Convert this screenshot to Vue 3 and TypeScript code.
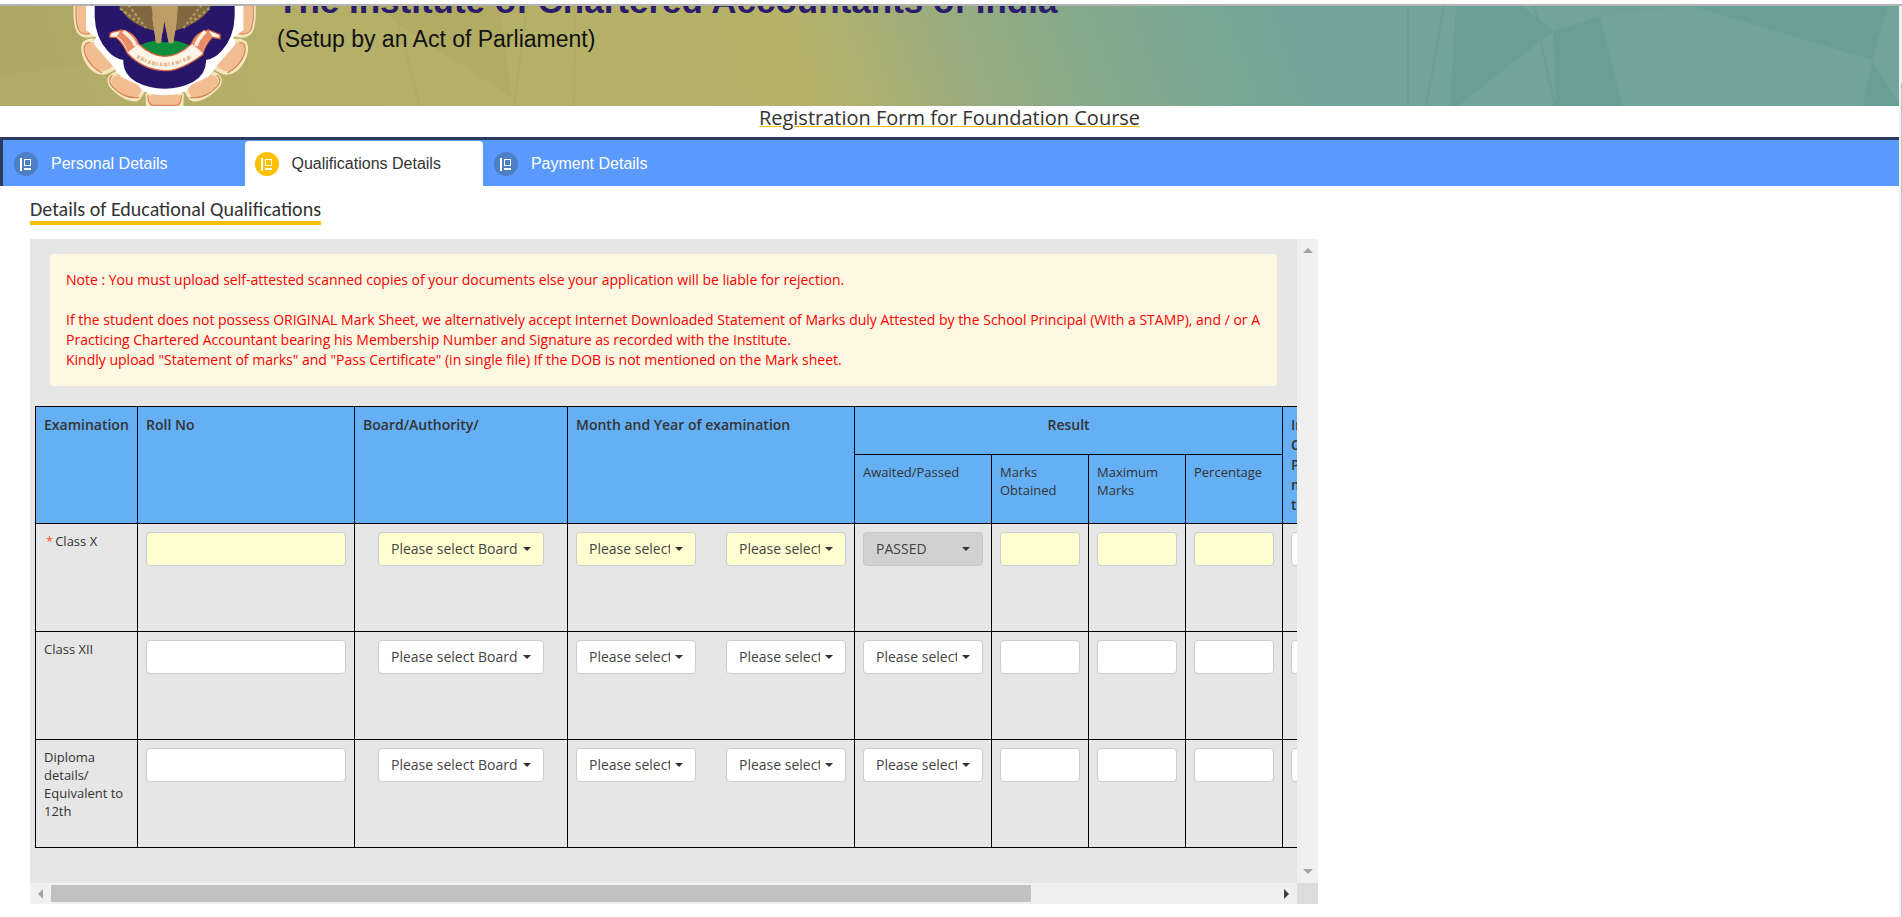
<script setup lang="ts">
interface Exam {
  id: string
  name: string
  required: boolean
  result: string
}

const exams: Exam[] = [
  { id: 'class-x', name: 'Class X', required: true, result: 'PASSED' },
  { id: 'class-xii', name: 'Class XII', required: false, result: 'Please select' },
  { id: 'diploma', name: 'Diploma details/ Equivalent to 12th', required: false, result: 'Please select' },
]

const tabs: { label: string; active: boolean }[] = [
  { label: 'Personal Details', active: false },
  { label: 'Qualifications Details', active: true },
  { label: 'Payment Details', active: false },
]

const markFields: string[] = ['Marks obtained', 'Maximum marks', 'Percentage']
</script>

<template>
  <div class="page">
    <div class="main">
      <header class="banner">
        <svg class="facets" viewBox="0 0 1899 100" preserveAspectRatio="none" aria-hidden="true">
          <path d="M0 0H75L85 58L0 70Z" fill="#a8a05e" opacity=".25" />
          <path d="M378 0H500L512 92L398 18Z" fill="#a69a57" opacity=".25" />
          <path d="M398 18L420 100" stroke="#a69f5b" stroke-width="2" opacity=".25" />
          <path d="M527 0L514 100M575 0L574 100" stroke="#a69f5b" stroke-width="2" opacity=".25" />
          <path d="M1408 0V100M1444 0L1426 100" stroke="#659a8c" stroke-width="2" opacity=".5" fill="none" />
          <path d="M1456 0H1522L1553 25L1458 100H1450Z" fill="#6a9f95" />
          <path d="M1600 10L1690 0H1602Z" fill="#6b9f93" opacity=".5" />
          <path d="M1553 25L1600 10L1622 100H1556Z" fill="#6a9f95" />
          <path d="M1534 0L1538 14M1541 36L1555 100" stroke="#659a8c" stroke-width="2" opacity=".6" />
          <path d="M1692 0H1888L1872 54Z" fill="#6a9f95" />
          <path d="M1872 54L1899 98V100H1863Z" fill="#6a9f95" />
        </svg>
        <svg class="emblem" viewBox="0 18 660 300" role="img" aria-label="Institute emblem">
          <g fill="#f3bd92" stroke="#f6e6bd" stroke-width="11" stroke-linejoin="round">
            <path d="M48 0H118V100Q70 118 54 92Q42 60 48 0Z" />
            <path d="M580 0H510V100Q558 118 574 92Q586 60 580 0Z" />
            <path d="M72 130Q88 116 124 124L175 195Q148 216 130 219Q100 220 78 180Q64 150 72 130Z" />
            <path d="M556 130Q540 116 504 124L453 195Q480 216 498 219Q528 220 550 180Q564 150 556 130Z" />
            <path d="M148 238Q154 222 180 215L255 255Q244 294 228 299Q196 300 162 267Q146 252 148 238Z" />
            <path d="M480 238Q474 222 448 215L373 255Q384 294 400 299Q432 300 466 267Q482 252 480 238Z" />
            <path d="M262 284Q284 274 314 274T366 284L364 330H264Z" />
          </g>
          <g fill="none" stroke="#d98559" stroke-width="4">
            <path d="M50 0Q44 60 56 90Q66 106 90 101M578 0Q584 60 572 90Q562 106 538 101" />
            <path d="M90 127Q65 128 76 165Q90 200 125 218M538 127Q563 128 552 165Q538 200 503 218" />
            <path d="M158 226Q139 240 158 260Q195 299 238 292M470 226Q489 240 470 260Q433 299 390 292" />
            <path d="M264 285Q263 313 280 316H348Q365 313 364 285" />
          </g>
          <path d="M78 0H550V90L520 112L527 132L475 192L461 211L445 230L393 255L379 274Q314 298 249 274L235 255L183 230L167 211L153 192L101 132L108 112L78 90Z" fill="#fff" />
          <path d="M104 0H524V50Q522 112 484 154Q464 176 438 180Q440 222 399 246Q360 266 314 266Q268 266 229 246Q188 222 190 180Q164 176 144 154Q106 112 104 50Z" fill="#28166b" />
          <path d="M170 0H458Q446 62 346 92L282 92Q192 70 170 0Z" fill="#81683f" />
          <path d="M180 25L235 68M205 15L258 84M448 25L392 68M425 15L370 84" stroke="#b2975e" stroke-width="7" stroke-dasharray="9 7" />
          <path d="M272 0H356L348 82L338 130H326L313 60L302 130H288Z" fill="#bd9d65" />
          <ellipse cx="314" cy="151" rx="82" ry="31" fill="#0c8e3e" />
          <path d="M306 127L313 64L326 127Z" fill="#28166b" />
          <path d="M302 130H288L276 50H298L313 64L326 50H352L340 130H326L313 64Z" fill="#bd9d65" />
          <path d="M150 112Q146 96 165 95L184 90Q222 96 236 132Q314 206 394 132Q408 96 446 90L480 104V116L456 112Q432 140 428 164Q360 214 312 212Q250 210 202 160Q190 130 168 112Z" fill="#fff4e5" stroke="#d7623e" stroke-width="4" />
          <path d="M182 92Q222 96 236 132L204 156Q192 122 170 108ZM446 92Q408 96 396 132L428 158Q432 130 458 110Z" fill="#e88b67" />
          <path d="M190 94Q222 118 226 138M436 94Q412 118 408 138" fill="none" stroke="#fff0df" stroke-width="11" />
          <path d="M232 169Q310 218 394 169" fill="none" stroke="#e6bd98" stroke-width="11" stroke-dasharray="8 4 11 3 4 6" />
        </svg>
        <div class="institute">
          <strong class="institute-name">The Institute of Chartered Accountants of India</strong>
          <span class="institute-note">(Setup by an Act of Parliament)</span>
        </div>
      </header>

      <h1 class="title"><span>Registration Form for Foundation Course</span></h1>

      <nav class="tabs">
        <a v-for="tab in tabs" :key="tab.label" href="#" class="tab" :class="{ active: tab.active }">
          <svg class="tab-icon" viewBox="0 0 24 24" aria-hidden="true">
            <circle class="disc" cx="12" cy="12" r="12" />
            <path d="M7 6V19" stroke="#fff" stroke-width="2" />
            <rect x="10.5" y="7.5" width="6" height="6" fill="none" stroke="#fff" />
            <path d="M10 17H17" stroke="#fff" stroke-width="2" />
          </svg>
          <span>{{ tab.label }}</span>
        </a>
      </nav>

      <main class="content">
        <h2 class="section-title">Details of Educational Qualifications</h2>

        <section class="panel">
          <div class="viewport">
            <div class="note">
              <p>Note : You must upload self-attested scanned copies of your documents else your application will be liable for rejection.</p>
              <br />
              <p>If the student does not possess ORIGINAL Mark Sheet, we alternatively accept Internet Downloaded Statement of Marks duly Attested by the School Principal (With a STAMP), and / or A Practicing Chartered Accountant bearing his Membership Number and Signature as recorded with the Institute.</p>
              <p>Kindly upload "Statement of marks" and "Pass Certificate" (in single file) If the DOB is not mentioned on the Mark sheet.</p>
            </div>

            <table class="grid">
              <colgroup>
                <col class="c-exam" />
                <col class="c-roll" />
                <col class="c-board" />
                <col class="c-month" />
                <col class="c-state" />
                <col class="c-mark" />
                <col class="c-mark" />
                <col class="c-mark" />
                <col class="c-last" />
              </colgroup>
              <thead>
                <tr class="head-top">
                  <th rowspan="2">Examination</th>
                  <th rowspan="2">Roll No</th>
                  <th rowspan="2">Board/Authority/</th>
                  <th rowspan="2">Month and Year of examination</th>
                  <th colspan="4" class="result">Result</th>
                  <th rowspan="2">In<br />C<br />P<br />m<br />t</th>
                </tr>
                <tr class="head-sub">
                  <th>Awaited/Passed</th>
                  <th>Marks Obtained</th>
                  <th>Maximum Marks</th>
                  <th>Percentage</th>
                </tr>
              </thead>
              <tbody>
                <tr v-for="exam in exams" :key="exam.id" :class="{ required: exam.required }">
                  <th scope="row"><span v-if="exam.required" class="star">*</span>{{ exam.name }}</th>
                  <td><input type="text" class="field" :aria-label="exam.name + ' roll number'" /></td>
                  <td>
                    <span class="pick board">
                      <select :aria-label="exam.name + ' board'"><option>Please select Board</option></select>
                    </span>
                  </td>
                  <td>
                    <div class="pair">
                      <span class="pick">
                        <select :aria-label="exam.name + ' month'"><option>Please select</option></select>
                      </span>
                      <span class="pick">
                        <select :aria-label="exam.name + ' year'"><option>Please select</option></select>
                      </span>
                    </div>
                  </td>
                  <td>
                    <span class="pick">
                      <select :aria-label="exam.name + ' result'" :disabled="exam.required"><option>{{ exam.result }}</option></select>
                    </span>
                  </td>
                  <td v-for="field in markFields" :key="field">
                    <input type="text" class="field" :aria-label="exam.name + ' ' + field" />
                  </td>
                  <td><input type="text" class="field plain" :aria-label="exam.name + ' institute'" /></td>
                </tr>
              </tbody>
            </table>
          </div>

          <div class="bar-y">
            <i class="arrow up"></i>
            <i class="arrow down"></i>
          </div>
          <div class="bar-x">
            <i class="arrow left"></i>
            <div class="track"><div class="thumb"></div></div>
            <i class="arrow right"></i>
          </div>
          <div class="corner"></div>
        </section>
      </main>
    </div>
    <div class="page-bar"><div class="page-thumb"></div></div>
  </div>
</template>

<style>
body {
  background: #fff;
}
</style>

<style scoped>
* {
  box-sizing: border-box;
}

.page {
  display: grid;
  grid-template-columns: minmax(0, 1fr) 3px;
  min-height: 100vh;
  padding-top: 4px;
  overflow: hidden;
  font-family: "Open Sans", sans-serif;
  font-size: 14px;
  line-height: 20px;
  color: #333;
}

.page-bar {
  border-top: 2px solid #b3b3b3;
  background: #f0f0f0;
  padding: 77px 0 0 2px;
}

.page-thumb {
  height: 100%;
  background: #c1c1c1;
}

.banner {
  position: relative;
  display: flex;
  height: 102px;
  overflow: hidden;
  border-top: 2px solid #b3b3b3;
  background: linear-gradient(70deg, #b0ab66 0, #b5b069 22%, #b7b268 42%, #aeb070 45%, #93ab82 52%, #84a98c 58%, #78a793 64%, #71a599 68%, #71a599 100%);
}

.facets {
  position: absolute;
  inset: 0;
  width: 100%;
  height: 100%;
}

.emblem {
  position: relative;
  flex: none;
  width: 220px;
  height: 100px;
  margin-left: 60px;
}

.institute {
  position: relative;
  display: flex;
  flex-direction: column;
  justify-content: flex-end;
  height: 51px;
  margin-left: -3px;
  font-family: "Liberation Sans", Arial, sans-serif;
  white-space: nowrap;
}

.institute-name {
  font-size: 35px;
  line-height: 40px;
  color: #2b1b6b;
}

.institute-note {
  font-size: 23px;
  line-height: 36px;
  color: #111;
}

.title {
  margin: 0;
  height: 31px;
  font-size: 20px;
  font-weight: 400;
  line-height: 23px;
  text-align: center;
}

.title span {
  text-decoration: underline #ffc000 1px;
}

.tabs {
  display: flex;
  height: 49px;
  border-top: 3px solid #2b3a5f;
  border-left: 3px solid #2b3a5f;
  background: #5a99fd;
  font-family: "Liberation Sans", Arial, sans-serif;
  font-size: 16px;
}

.tab {
  display: flex;
  align-items: center;
  gap: 13px;
  padding: 0 42px 0 11px;
  margin-top: 1px;
  border-radius: 4px 4px 0 0;
  color: #fff;
  text-decoration: none;
}

.tab:first-child {
  padding-right: 77px;
}

.tab.active {
  padding-left: 10px;
  background: #fff;
  color: #333;
}

.tab-icon {
  width: 24px;
  height: 24px;
}

.disc {
  fill: #4d7fc4;
}

.active .disc {
  fill: #ffc000;
}

.content {
  padding: 12px 30px;
}

.section-title {
  display: table;
  margin: 0 0 14px;
  border-bottom: 4px solid #ffc000;
  font-family: Carlito, Lato, sans-serif;
  font-size: 20px;
  font-weight: 300;
  line-height: 23px;
}

.panel {
  display: grid;
  grid-template-columns: minmax(0, 1fr) 21px;
  grid-template-rows: auto 21px;
  max-width: 1288px;
}

.viewport {
  overflow: hidden;
  padding: 15px 0 35px 5px;
  background: #e6e6e6;
}

.note {
  margin: 0 20px 20px 15px;
  padding: 16px;
  border-radius: 4px;
  background: #fef7e1;
  color: #f00;
}

.note p {
  margin: 0;
}

.grid {
  width: 1560px;
  table-layout: fixed;
  border-collapse: collapse;
}

.c-exam { width: 102px; }
.c-roll { width: 217px; }
.c-board { width: 213px; }
.c-month { width: 287px; }
.c-state { width: 137px; }
.c-mark { width: 97px; }

.grid th,
.grid td {
  padding: 8px;
  border: 1px solid #000;
  text-align: left;
  vertical-align: top;
}

.grid thead th {
  background: #65aff4;
  font-weight: 600;
}

.grid .head-top {
  height: 48px;
}

.grid .head-sub {
  height: 69px;
}

.grid .result {
  text-align: center;
}

.grid .head-sub th,
.grid tbody th {
  font-size: 13px;
  font-weight: 500;
  line-height: 18px;
}

.grid tbody tr {
  height: 108px;
}

.star {
  margin: 0 2px;
  color: #ff5722;
}

.field,
.pick select {
  display: block;
  width: 100%;
  height: 34px;
  border: 1px solid #ccc;
  border-radius: 4px;
  background: #fff;
  font: inherit;
  color: #444;
}

.pick {
  position: relative;
  display: block;
  width: 120px;
}

.pick.board {
  width: 166px;
  margin: 0 auto;
}

.pick select {
  appearance: none;
  padding: 0 25px 0 12px;
  overflow: hidden;
  font-weight: 400;
  white-space: nowrap;
  text-overflow: clip;
}

.pick::after {
  content: "";
  position: absolute;
  top: 15px;
  right: 13px;
  border: 4px solid transparent;
  border-top-color: #333;
  border-bottom: 0;
}

.required .field:not(.plain),
.required select {
  background: #ffffd2;
}

.required select:disabled {
  background: #d1d1d1;
  border-color: #c8c8c8;
  opacity: 1;
}

.pair {
  display: flex;
  justify-content: space-between;
}

.bar-y {
  display: flex;
  flex-direction: column;
  align-items: center;
  justify-content: space-between;
  padding: 9px 0;
  background: #f0f0f0;
}

.bar-x {
  display: flex;
  align-items: center;
  gap: 8px;
  padding: 2px 8px;
  background: #f0f0f0;
}

.track {
  flex: 1;
  height: 17px;
}

.thumb {
  width: 80%;
  height: 100%;
  background: #c1c1c1;
}

.corner {
  background: #dcdcdc;
}

.arrow {
  border: 5px solid transparent;
}

.arrow.up {
  border-top: 0;
  border-bottom-color: #a3a3a3;
}

.arrow.down {
  border-bottom: 0;
  border-top-color: #a3a3a3;
}

.arrow.left {
  border-left: 0;
  border-right-color: #a3a3a3;
}

.arrow.right {
  border-right: 0;
  border-left-color: #404040;
}
</style>
